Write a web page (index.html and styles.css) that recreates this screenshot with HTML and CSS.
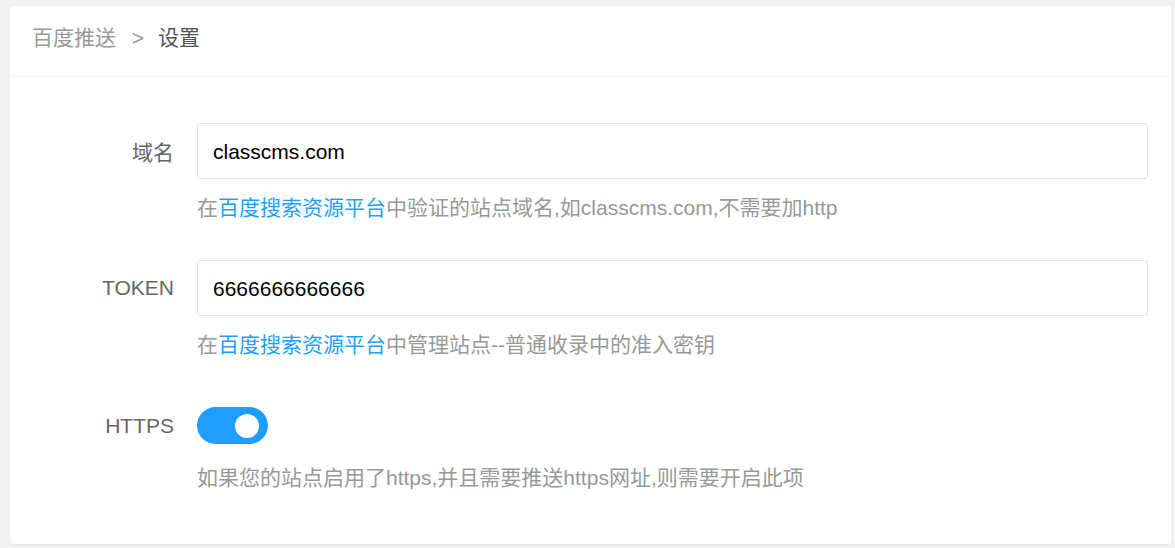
FILE: index.html
```html
<!DOCTYPE html>
<html>
  <head>
    <meta charset="utf-8" />
    <meta name="viewport" content="width=device-width, initial-scale=1" />
    <link rel="stylesheet" href="styles.css">
  </head>
  <body>
    <div class="card">
      <div class="card-header">
        <span class="crumb">百度推送</span>
        <span class="crumb-sep">&gt;</span>
        <span class="crumb-current">设置</span>
      </div>

      <div class="card-body">
        <div class="form-item">
          <label class="form-label">域名</label>
          <input class="form-input" type="text" value="classcms.com" />
          <div class="form-help">在<a href="#">百度搜索资源平台</a>中验证的站点域名,如classcms.com,不需要加http</div>
        </div>

        <div class="form-item">
          <label class="form-label">TOKEN</label>
          <input class="form-input" type="text" value="6666666666666" />
          <div class="form-help">在<a href="#">百度搜索资源平台</a>中管理站点--普通收录中的准入密钥</div>
        </div>

        <div class="form-item form-item-switch">
          <label class="form-label">HTTPS</label>
          <div class="switch"><span class="switch-knob"></span></div>
          <div class="form-help">如果您的站点启用了https,并且需要推送https网址,则需要开启此项</div>
        </div>
      </div>
    </div>
  </body>
</html>
```

FILE: styles.css
```css
body {
  margin: 0;
  padding: 6px 4px 4px 10px;
  background: #f2f2f2;
  font-family: "Liberation Sans", "Noto Sans CJK SC", sans-serif;
  font-size: 21px;
  color: #333;
}

.card {
  background: #fff;
  border-radius: 3px;
  box-shadow: 0 1px 2px rgba(0, 0, 0, 0.06);
}

.card-header {
  height: 70px;
  line-height: 64px;
  padding-left: 22px;
  border-bottom: 1px solid #f6f6f6;
  white-space: nowrap;
}

.crumb {
  color: #999;
}

.crumb-sep {
  color: #999;
  margin: 0 8px 0 10px;
}

.crumb-current {
  color: #555;
}

.card-body {
  padding: 46px 23px 51px 0;
}

.form-item {
  display: grid;
  grid-template-columns: 187px 1fr;
  margin-bottom: 37px;
}

.form-item-switch {
  margin-top: 47px;
  margin-bottom: 0;
}

.form-label {
  align-self: center;
  text-align: right;
  padding-right: 23px;
  color: #666;
  white-space: nowrap;
}

.form-input {
  box-sizing: border-box;
  height: 56px;
  padding: 2px 15px 0;
  border: 1px solid #e6e6e6;
  border-radius: 3px;
  font-family: inherit;
  font-size: 21px;
  color: #000;
  outline: none;
}

.form-help {
  grid-column: 2;
  margin-top: 14px;
  line-height: 30px;
  color: #999;
  white-space: nowrap;
}

.form-item-switch .form-help {
  margin-top: 19px;
}

.form-help a {
  color: #1e9fff;
  text-decoration: none;
}

.switch {
  box-sizing: border-box;
  width: 71px;
  height: 37px;
  border-radius: 19px;
  background: #1e9fff;
  display: flex;
  align-items: center;
  justify-content: flex-end;
  padding-right: 9px;
}

.switch-knob {
  width: 24px;
  height: 24px;
  border-radius: 50%;
  background: #fff;
}
```
